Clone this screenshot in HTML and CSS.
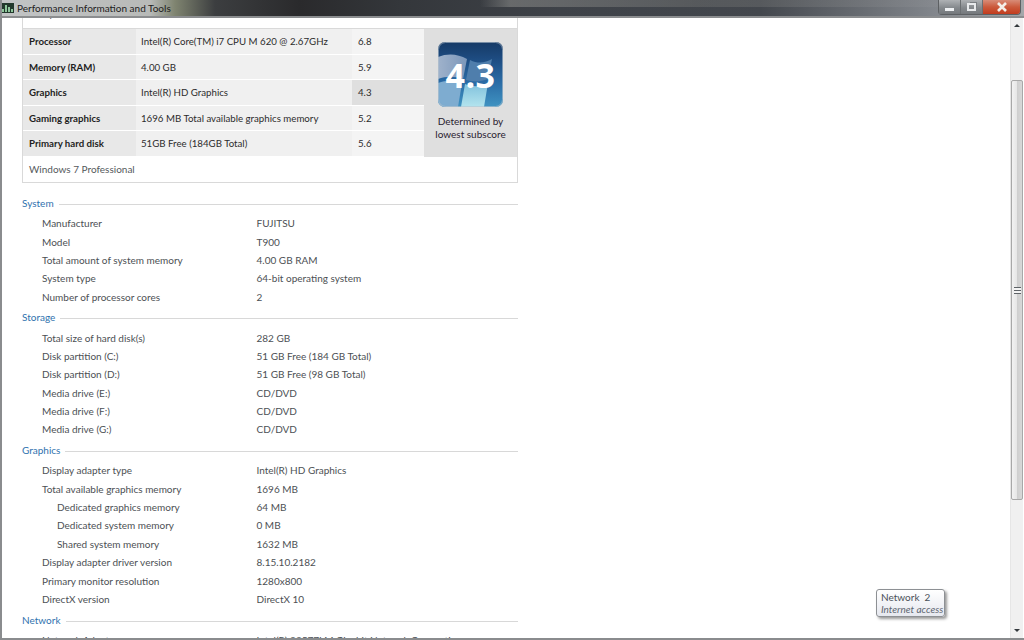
FILE: index.html
```html
<!DOCTYPE html>
<html lang="en">
<head>
    <meta charset="UTF-8">
    <title>Performance Information and Tools</title>
    <link rel="stylesheet" href="styles.css">
</head>
<body>
<div class="window">
    <div class="titlebar">
        <svg class="app_icon" width="13" height="10" viewBox="0 0 13 10">
            <rect width="13" height="10" fill="#22382c"/>
            <path d="M1 9V6h2v3zM4 9V2h2v7zM7 9V4h2v5zM10 9V6h2v3z" fill="#8fc79c"/>
        </svg>
        <span class="title_text">Performance Information and Tools</span>
        <div class="caption">
            <div class="cap_btn cap_min"><span class="min_bar"></span></div>
            <div class="cap_btn cap_max"><span class="max_box"></span></div>
            <div class="cap_btn cap_close">
                <svg width="12" height="10" viewBox="0 0 12 10"><path d="M2 1l8 8M10 1L2 9" stroke="#f4efe9" stroke-width="2.6"/></svg>
            </div>
        </div>
    </div>
    <div class="main">
        <div class="content">
            <div class="score_box">
                <div class="score_head">Component</div>
                <div class="score_grid">
                    <div class="score_rows">
                        <div class="score_row">
                            <div class="c_name">Processor</div>
                            <div class="c_desc">Intel(R) Core(TM) i7 CPU M 620 @ 2.67GHz</div>
                            <div class="c_num">6.8</div>
                        </div>
                        <div class="score_row">
                            <div class="c_name">Memory (RAM)</div>
                            <div class="c_desc">4.00 GB</div>
                            <div class="c_num">5.9</div>
                        </div>
                        <div class="score_row lowest">
                            <div class="c_name">Graphics</div>
                            <div class="c_desc">Intel(R) HD Graphics</div>
                            <div class="c_num">4.3</div>
                        </div>
                        <div class="score_row">
                            <div class="c_name">Gaming graphics</div>
                            <div class="c_desc">1696 MB Total available graphics memory</div>
                            <div class="c_num">5.2</div>
                        </div>
                        <div class="score_row">
                            <div class="c_name">Primary hard disk</div>
                            <div class="c_desc">51GB Free (184GB Total)</div>
                            <div class="c_num">5.6</div>
                        </div>
                    </div>
                    <div class="base_score">
                        <div class="badge">
                            <svg class="badge_art" width="65" height="65" viewBox="0 0 65 65">
                                <defs>
                                    <linearGradient id="bg" x1="0" y1="0" x2="0" y2="1">
                                        <stop offset="0" stop-color="#163a66"/>
                                        <stop offset="0.25" stop-color="#1d4b80"/>
                                        <stop offset="0.6" stop-color="#2a6aa4"/>
                                        <stop offset="1" stop-color="#3f93c2"/>
                                    </linearGradient>
                                    <linearGradient id="pane_a" x1="0" y1="0" x2="1" y2="0">
                                        <stop offset="0" stop-color="#9fb2cb"/>
                                        <stop offset="1" stop-color="#7b97ba"/>
                                    </linearGradient>
                                    <linearGradient id="pane_d" x1="0" y1="0" x2="0" y2="1">
                                        <stop offset="0" stop-color="#7fc0dc"/>
                                        <stop offset="1" stop-color="#b4e4ee"/>
                                    </linearGradient>
                                </defs>
                                <rect width="65" height="65" rx="7" fill="url(#bg)"/>
                                <path d="M0 15C10 11 20 12 29 17L25 37C17 34 8 34 0 37z" fill="url(#pane_a)"/>
                                <path d="M32 18C40 22 47 21 54 17L50 37C43 40 35 40 28 38z" fill="#4f7eac"/>
                                <path d="M0 41C8 38 17 38 24 41L20 65H7a7 7 0 0 1-7-7z" fill="#7eacd0"/>
                                <path d="M27 42C35 45 43 45 50 41L46 65H23z" fill="url(#pane_d)"/>
                                <rect x="0.5" y="0.5" width="64" height="64" rx="7" fill="none" stroke="#b9c4cf" stroke-opacity="0.6"/>
                            </svg>
                            <span class="badge_num">4.3</span>
                        </div>
                        <div class="badge_note">Determined by<br>lowest subscore</div>
                    </div>
                </div>
                <div class="edition">Windows 7 Professional</div>
            </div>

            <div class="section">
                <div class="sec_head"><span>System</span><i></i></div>
                <div class="row"><span>Manufacturer</span><span>FUJITSU</span></div>
                <div class="row"><span>Model</span><span>T900</span></div>
                <div class="row"><span>Total amount of system memory</span><span>4.00 GB RAM</span></div>
                <div class="row"><span>System type</span><span>64-bit operating system</span></div>
                <div class="row"><span>Number of processor cores</span><span>2</span></div>
            </div>

            <div class="section">
                <div class="sec_head"><span>Storage</span><i></i></div>
                <div class="row"><span>Total size of hard disk(s)</span><span>282 GB</span></div>
                <div class="row"><span>Disk partition (C:)</span><span>51 GB Free (184 GB Total)</span></div>
                <div class="row"><span>Disk partition (D:)</span><span>51 GB Free (98 GB Total)</span></div>
                <div class="row"><span>Media drive (E:)</span><span>CD/DVD</span></div>
                <div class="row"><span>Media drive (F:)</span><span>CD/DVD</span></div>
                <div class="row"><span>Media drive (G:)</span><span>CD/DVD</span></div>
            </div>

            <div class="section">
                <div class="sec_head"><span>Graphics</span><i></i></div>
                <div class="row"><span>Display adapter type</span><span>Intel(R) HD Graphics</span></div>
                <div class="row"><span>Total available graphics memory</span><span>1696 MB</span></div>
                <div class="row sub"><span>Dedicated graphics memory</span><span>64 MB</span></div>
                <div class="row sub"><span>Dedicated system memory</span><span>0 MB</span></div>
                <div class="row sub"><span>Shared system memory</span><span>1632 MB</span></div>
                <div class="row"><span>Display adapter driver version</span><span>8.15.10.2182</span></div>
                <div class="row"><span>Primary monitor resolution</span><span>1280x800</span></div>
                <div class="row"><span>DirectX version</span><span>DirectX 10</span></div>
            </div>

            <div class="section">
                <div class="sec_head"><span>Network</span><i></i></div>
                <div class="row"><span>Network Adapter</span><span>Intel(R) 82577LM Gigabit Network Connection</span></div>
            </div>
        </div>
        <div class="scrollbar">
            <div class="arrow arrow_up"></div>
            <div class="track">
                <div class="thumb"><div class="grip"></div></div>
            </div>
            <div class="arrow arrow_down"></div>
        </div>
    </div>
    <div class="bottom_edge"></div>
    <div class="tooltip">
        <div>Network&nbsp; 2</div>
        <div class="tip_sub">Internet access</div>
    </div>
</div>
</body>
</html>
```

FILE: styles.css
```css
* {
    box-sizing: border-box;
}

body {
    margin: 0;
    font-family: Lato, "Open Sans", "Liberation Sans", sans-serif;
    font-size: 10px;
    color: #4c5054;
    background-color: #fff;
}

.window {
    position: relative;
    width: 1024px;
    height: 640px;
    overflow: hidden;
    display: flex;
    flex-direction: column;
    border-left: 2px solid #8a8c8e;
}

.titlebar {
    flex: none;
    height: 18px;
    margin-left: -2px;
    display: flex;
    align-items: center;
    padding: 0 0 1px 1px;
    background:
        linear-gradient(90deg, transparent 480px, rgba(170, 170, 165, 0.4) 510px, rgba(140, 140, 135, 0.28) 700px, rgba(150, 152, 155, 0.2) 930px, transparent 1024px) 0 0 / 100% 7px no-repeat,
        linear-gradient(90deg, #c2c4c5 0, #b8bab8 150px, #7f8470 175px, #3c3e40 215px, #2a2a2c 300px, #34373b 400px, #3e4248 560px, #43474d 760px, #80848a 930px, #a4a7aa 1024px);
    border-bottom: 2px solid #8b8d8f;
    color: #1c1c1c;
}

.app_icon {
    flex: none;
    margin-right: 3px;
}

.title_text {
    white-space: nowrap;
}

.caption {
    margin-left: auto;
    margin-right: 3px;
    align-self: flex-start;
    height: 15px;
    display: flex;
    border: 1px solid #5d6063;
    border-top: 0;
    border-radius: 0 0 4px 4px;
}

.cap_btn {
    height: 14px;
    display: flex;
    align-items: center;
    justify-content: center;
}

.cap_min,
.cap_max {
    width: 22px;
    background: linear-gradient(#aeb1b4, #85898d 55%, #74787c);
    border-right: 1px solid #6b6f72;
}

.cap_close {
    width: 37px;
    background: linear-gradient(#d88c78, #cb5a3c 50%, #c23c1e);
    border-radius: 0 0 3px 0;
}

.min_bar {
    width: 9px;
    height: 3px;
    margin-top: 4px;
    background-color: #eef0f2;
}

.max_box {
    width: 9px;
    height: 8px;
    border: 2px solid #e8eaec;
    box-shadow: 2px -2px 0 -1px #7b7f83;
}

.main {
    flex: 1;
    min-height: 0;
    display: flex;
}

.content {
    flex: 1;
    min-width: 0;
    padding: 0 492px 0 20px;
    overflow: hidden;
}

.score_box {
    margin-top: -11px;
    border: 1px solid #d9d9d9;
    border-top: 0;
}

.score_head {
    height: 22px;
    padding-left: 6px;
    line-height: 12px;
    border-bottom: 1px solid #d9d9d9;
}

.score_grid {
    display: flex;
}

.score_rows {
    flex: none;
    width: 401px;
    font-size: 9.7px;
}

.score_row {
    height: 25.5px;
    display: flex;
    align-items: center;
    border-bottom: 1px solid #fff;
    background-color: #f4f4f4;
}

.c_name {
    width: 113px;
    height: 100%;
    display: flex;
    align-items: center;
    padding-left: 6px;
    background-color: #e8e8e8;
    color: #1e1e1e;
    font-weight: 700;
}

.c_desc {
    width: 216px;
    height: 100%;
    display: flex;
    align-items: center;
    padding-left: 5px;
    background-color: #f0f0f0;
    color: #2c2c2c;
}

.c_num {
    flex: 1;
    height: 100%;
    display: flex;
    align-items: center;
    padding-left: 6px;
    color: #2c2c2c;
}

.lowest .c_num {
    background-color: #dfdfdf;
}

.base_score {
    flex: 1;
    background-color: #dfdfdf;
    display: flex;
    flex-direction: column;
    align-items: center;
    padding-top: 13px;
}

.badge {
    position: relative;
    width: 65px;
    height: 65px;
}

.badge_art {
    display: block;
}

.badge_num {
    position: absolute;
    inset: 0;
    display: flex;
    align-items: center;
    justify-content: center;
    color: #fff;
    font-family: "Open Sans", sans-serif;
    font-size: 34px;
    font-weight: 700;
    letter-spacing: 0.5px;
}

.badge_note {
    margin-top: 8px;
    text-align: center;
    line-height: 13px;
    color: #2a2230;
}

.edition {
    height: 25px;
    display: flex;
    align-items: center;
    padding-left: 6px;
    color: #55595c;
}

.section {
    margin-top: 0.4px;
}

.score_box + .section {
    margin-top: 9.5px;
}

.sec_head {
    height: 22px;
    display: flex;
    align-items: center;
    gap: 5px;
    color: #2f72ae;
}

.sec_head i {
    flex: 1;
    height: 1px;
    margin-top: 3px;
    background-color: #d8d8d8;
}

.row {
    height: 18.4px;
    display: flex;
    align-items: center;
    padding-left: 20px;
    white-space: nowrap;
}

.row span:first-child {
    width: 214.5px;
}

.sub {
    padding-left: 35px;
}

.sub span:first-child {
    width: 199.5px;
}

.scrollbar {
    flex: none;
    width: 13px;
    margin-right: 1px;
    display: flex;
    flex-direction: column;
    background-color: #f0f0f0;
    border-left: 1px solid #e6e6e6;
}

.arrow {
    flex: none;
    height: 16px;
    position: relative;
}

.arrow::after {
    content: "";
    position: absolute;
    left: 3px;
    border-left: 3px solid transparent;
    border-right: 3px solid transparent;
}

.arrow_up::after {
    top: 6px;
    border-bottom: 3px solid #33383c;
}

.arrow_down::after {
    top: 7px;
    border-top: 3px solid #33383c;
}

.track {
    flex: 1;
    padding-top: 46px;
}

.thumb {
    height: 420px;
    display: flex;
    align-items: center;
    justify-content: center;
    border: 1px solid #a8a8a8;
    border-radius: 2px;
    background: linear-gradient(90deg, #f2f2f2, #e6e6e6 50%, #cfcfcf 55%, #d8d8d8);
}

.grip {
    width: 7px;
    height: 7px;
    background: repeating-linear-gradient(#5f6468 0, #5f6468 1px, #f4f4f4 1px, #f4f4f4 3px);
}

.bottom_edge {
    flex: none;
    height: 2px;
    margin-left: -2px;
    background-color: #8a8c8e;
}

.tooltip {
    position: absolute;
    left: 874px;
    top: 589px;
    width: 69px;
    height: 28px;
    padding: 1px 0 0 4px;
    border: 1px solid #8d9094;
    border-radius: 3px;
    background: linear-gradient(#fff, #e6e8ef);
    box-shadow: 2px 2px 3px rgba(0, 0, 0, 0.4);
    line-height: 12px;
    white-space: nowrap;
    color: #4a5058;
}

.tip_sub {
    font-style: italic;
    color: #5e6670;
}
```
